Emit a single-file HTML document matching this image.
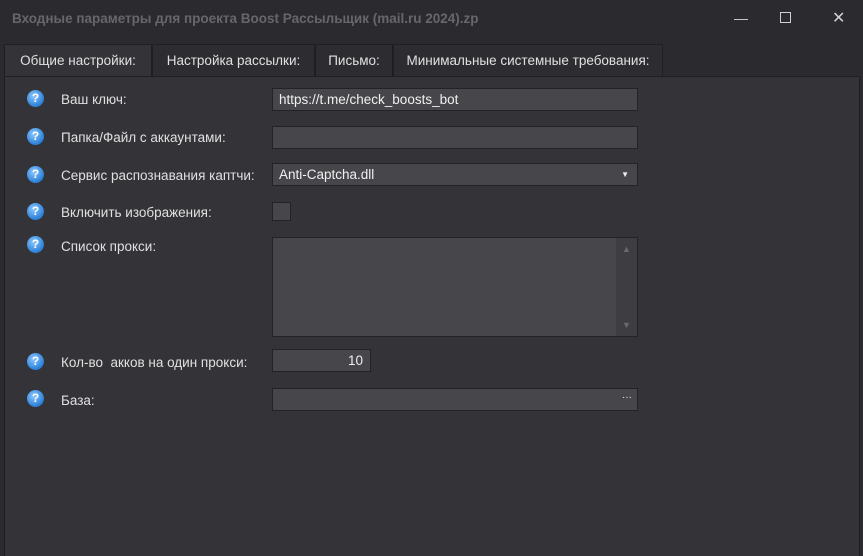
<!DOCTYPE html>
<html><head><meta charset="utf-8"><style>
*{margin:0;padding:0;box-sizing:border-box}
body{width:863px;height:548px;background:#2b2b2f;font-family:"Liberation Sans","Noto Sans CJK SC",sans-serif;color:#e6e6e6;font-size:13.5px;position:relative;overflow:hidden}
.title{position:absolute;left:12px;top:11px;font-weight:bold;color:#66666c;font-size:13.5px}
.ctl{position:absolute;top:10px;color:#d0d0d0;font-size:14px}
.tab{position:absolute;top:44px;height:32px;background:#2d2d31;border:1px solid #1f1f22;border-bottom:none;line-height:31px;text-align:center;font-size:13.5px;color:#e0e0e0}
.panel{position:absolute;left:4px;top:76px;width:856px;height:480px;background:#343338;border-left:1px solid #1f1f22;border-right:1px solid #1f1f22;border-top:1px solid #1f1f22}
.q{position:absolute;left:27px;width:17px;height:17px;border-radius:50%;background:radial-gradient(circle at 40% 35%,#8cc8ff,#2a7fd6 70%);color:#fff;font-weight:bold;font-size:12px;line-height:17px;text-align:center}
.lab{position:absolute;left:61px;font-size:13.5px;color:#e0e0e0}
.in{position:absolute;left:272px;width:366px;height:23px;background:#46464b;border:1px solid #232326;font-size:13.5px;line-height:21px;padding-left:6px;color:#f0f0f0}
</style></head><body>
<div class="title">Входные параметры для проекта Boost Рассыльщик (mail.ru 2024).zp</div>
<div class="ctl" style="left:734px">—</div>
<div class="ctl" style="left:780px;top:12px;width:11px;height:11px;border:1.5px solid #d0d0d0"></div>
<div class="ctl" style="left:832px;font-size:16px;top:8px">✕</div>
<div class="panel"></div>
<div class="tab" style="left:4px;width:148px;background:#343338">Общие настройки:</div>
<div class="tab" style="left:152px;width:163px">Настройка рассылки:</div>
<div class="tab" style="left:315px;width:78px">Письмо:</div>
<div class="tab" style="left:393px;width:270px">Минимальные системные требования:</div>

<div class="q" style="top:90px">?</div><div class="lab" style="top:92px">Ваш ключ:</div>
<div class="in" style="top:88px">https://t.me/check_boosts_bot</div>
<div class="q" style="top:128px">?</div><div class="lab" style="top:130px">Папка/Файл с аккаунтами:</div>
<div class="in" style="top:126px"></div>
<div class="q" style="top:166px">?</div><div class="lab" style="top:168px">Сервис распознавания каптчи:</div>
<div class="in" style="top:163px">Anti-Captcha.dll<span style="position:absolute;right:8px;top:0;font-size:8px">▼</span></div>
<div class="q" style="top:203px">?</div><div class="lab" style="top:205px">Включить изображения:</div>
<div class="in" style="top:202px;width:19px;height:19px;left:272px;padding:0"></div>
<div class="q" style="top:236px">?</div><div class="lab" style="top:239px">Список прокси:</div>
<div class="in" style="top:237px;height:100px"><div style="position:absolute;right:0;top:0;width:21px;height:98px;background:#3e3e42;color:#6a6a6e;font-size:9px;text-align:center;line-height:22px">▲<div style="position:absolute;bottom:0;width:21px">▼</div></div></div>
<div class="q" style="top:353px">?</div><div class="lab" style="top:355px">Кол-во&nbsp; акков на один прокси:</div>
<div class="in" style="top:349px;width:99px;text-align:right;padding-right:7px">10</div>
<div class="q" style="top:390px">?</div><div class="lab" style="top:393px">База:</div>
<div class="in" style="top:388px"><span style="position:absolute;right:5px;top:-2px;font-size:10px">···</span></div>
</body></html>
